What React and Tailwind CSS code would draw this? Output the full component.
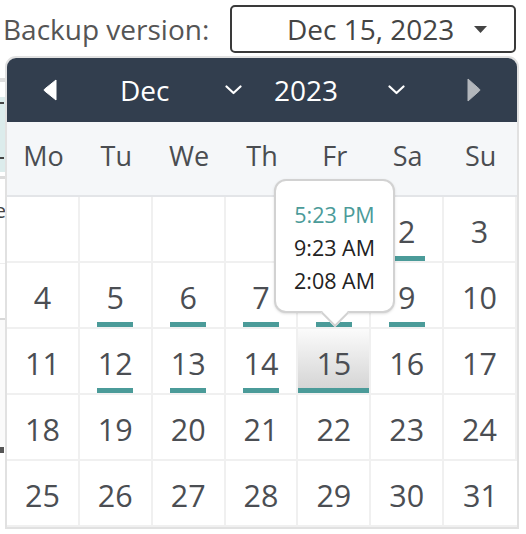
import React from "react";

const days = [
  null, null, null, null, 1, 2, 3,
  4, 5, 6, 7, 8, 9, 10,
  11, 12, 13, 14, 15, 16, 17,
  18, 19, 20, 21, 22, 23, 24,
  25, 26, 27, 28, 29, 30, 31,
];

const marked = [1, 2, 5, 6, 7, 8, 9, 12, 13, 14];
const selected = 15;
const weekDays = ["Mo", "Tu", "We", "Th", "Fr", "Sa", "Su"];

const Chevron = () => (
  <svg width="17" height="10" viewBox="0 0 17 10" fill="none">
    <path d="M1.5 1.5 L8.5 8 L15.5 1.5" stroke="#fff" strokeWidth="2.2" strokeLinecap="round" strokeLinejoin="round" />
  </svg>
);

const DayCell = ({ day }) => {
  const isSel = day === selected;
  const isMarked = marked.includes(day);
  return (
    <div
      className={
        "relative h-[66px] border-b-2 border-r-2 border-[#f0f0f0] last:border-r-0 flex justify-center " +
        (isSel ? "bg-gradient-to-b from-[#fbfbfb] to-[#d2d2d2]" : "bg-white")
      }
    >
      {day && (
        <span className="pt-[14px] text-[30.5px] leading-[40px] text-[#4b4e53]">{day}</span>
      )}
      {isMarked && (
        <span className="absolute bottom-0 left-1/2 -translate-x-1/2 w-[36px] h-[5px] bg-[#4b9b99]" />
      )}
      {isSel && <span className="absolute bottom-0 left-0 right-0 h-[5px] bg-[#4b9b99]" />}
    </div>
  );
};

const App = () => {
  return (
    <div
      className="relative w-[526px] h-[534px] bg-white overflow-hidden"
      style={{ fontFamily: '"Open Sans", "Liberation Sans", sans-serif' }}
    >
      {/* top row */}
      <div className="flex items-center h-[58px]">
        <span className="pl-[3px] text-[28px] text-[#555]">Backup version:</span>
        <button className="ml-[21px] w-[286px] h-[48px] border-2 border-[#3a3a3a] rounded-[5px] flex items-center justify-end pr-[27px]">
          <span className="text-[28px] text-[#444]">Dec 15, 2023</span>
          <svg className="ml-[20px]" width="13" height="7" viewBox="0 0 13 7">
            <path d="M0 0 L13 0 L6.5 7 Z" fill="#444" />
          </svg>
        </button>
      </div>

      {/* page content behind the popup */}
      <div className="w-[120px]">
        <div className="h-[20px]" />
        <div className="h-[4px] bg-[#dedede]" />
        <div className="h-[15px]" />
        <div className="h-[75px] bg-[#dcecec] relative">
          <span className="absolute left-0 top-[5px] w-[4px] h-[2px] bg-[#444]" />
          <span className="absolute left-0 top-[60px] w-[4px] h-[2px] bg-[#444]" />
        </div>
        <div className="h-[4px]" />
        <div className="h-[3px] bg-[#dcdcdc]" />
        <div className="h-[84px] flex">
          <div className="w-[6px] overflow-hidden flex justify-end pt-[22px]">
            <span className="text-[20px] leading-[20px] text-[#444]">e</span>
          </div>
        </div>
        <div className="h-[55px] border-t border-[#eee]" />
        <div className="h-[2px] bg-[#d8d8d8]" />
        <div className="h-[127px] bg-[#fafafa] relative">
          <span className="absolute left-0 top-[127px] w-[4px] h-[6px] bg-[#555]" />
        </div>
      </div>

      {/* calendar popup */}
      <div className="absolute left-[5px] top-[56px] w-[514px] border-2 border-[#e1e1e1] rounded-t-[11px] bg-white">
        <div className="h-[64px] bg-[#323e4e] rounded-t-[9px] flex items-center text-white text-[28px]">
          <svg className="ml-[36px]" width="14" height="22" viewBox="0 0 14 22">
            <path d="M13 1 L13 21 L1.5 11.8 Q0.5 11 1.5 10.2 Z" fill="#fff" stroke="#fff" strokeLinejoin="round" />
          </svg>
          <div className="ml-[63px] w-[122px] flex items-center justify-between">
            <span>Dec</span>
            <Chevron />
          </div>
          <div className="ml-[32px] w-[131px] flex items-center justify-between">
            <span>2023</span>
            <Chevron />
          </div>
          <svg className="ml-[62px]" width="14" height="24" viewBox="0 0 14 24">
            <path d="M1 1 L1 23 L12.5 12.8 Q13.5 12 12.5 11.2 Z" fill="#b3b7bc" stroke="#b3b7bc" strokeLinejoin="round" />
          </svg>
        </div>
        <div className="h-[75px] pb-[4px] bg-[#f5f7f9] border-b-2 border-[#e3e5e8] grid grid-cols-7 items-center">
          {weekDays.map((d) => (
            <span key={d} className="text-center text-[27px] text-[#4a4d51]">
              {d}
            </span>
          ))}
        </div>
        <div className="grid grid-cols-7">
          {days.map((d, i) => (
            <DayCell key={i} day={d} />
          ))}
        </div>
      </div>

      {/* tooltip with versions */}
      <div className="absolute left-[274px] top-[179px] w-[121px] h-[134px] bg-white border-2 border-[#d2d2d2] rounded-[12px] shadow-sm">
        <div className="absolute left-1/2 -bottom-[12px] -translate-x-1/2 w-[20px] h-[20px] rotate-45 bg-white border-b-2 border-r-2 border-[#d2d2d2]" />
        <div className="relative pt-[17px] flex flex-col items-center text-[21.5px] leading-[33px] text-[#222]">
          <span className="text-[#4b9b99]">5:23 PM</span>
          <span>9:23 AM</span>
          <span>2:08 AM</span>
        </div>
      </div>
    </div>
  );
};

export default App;
